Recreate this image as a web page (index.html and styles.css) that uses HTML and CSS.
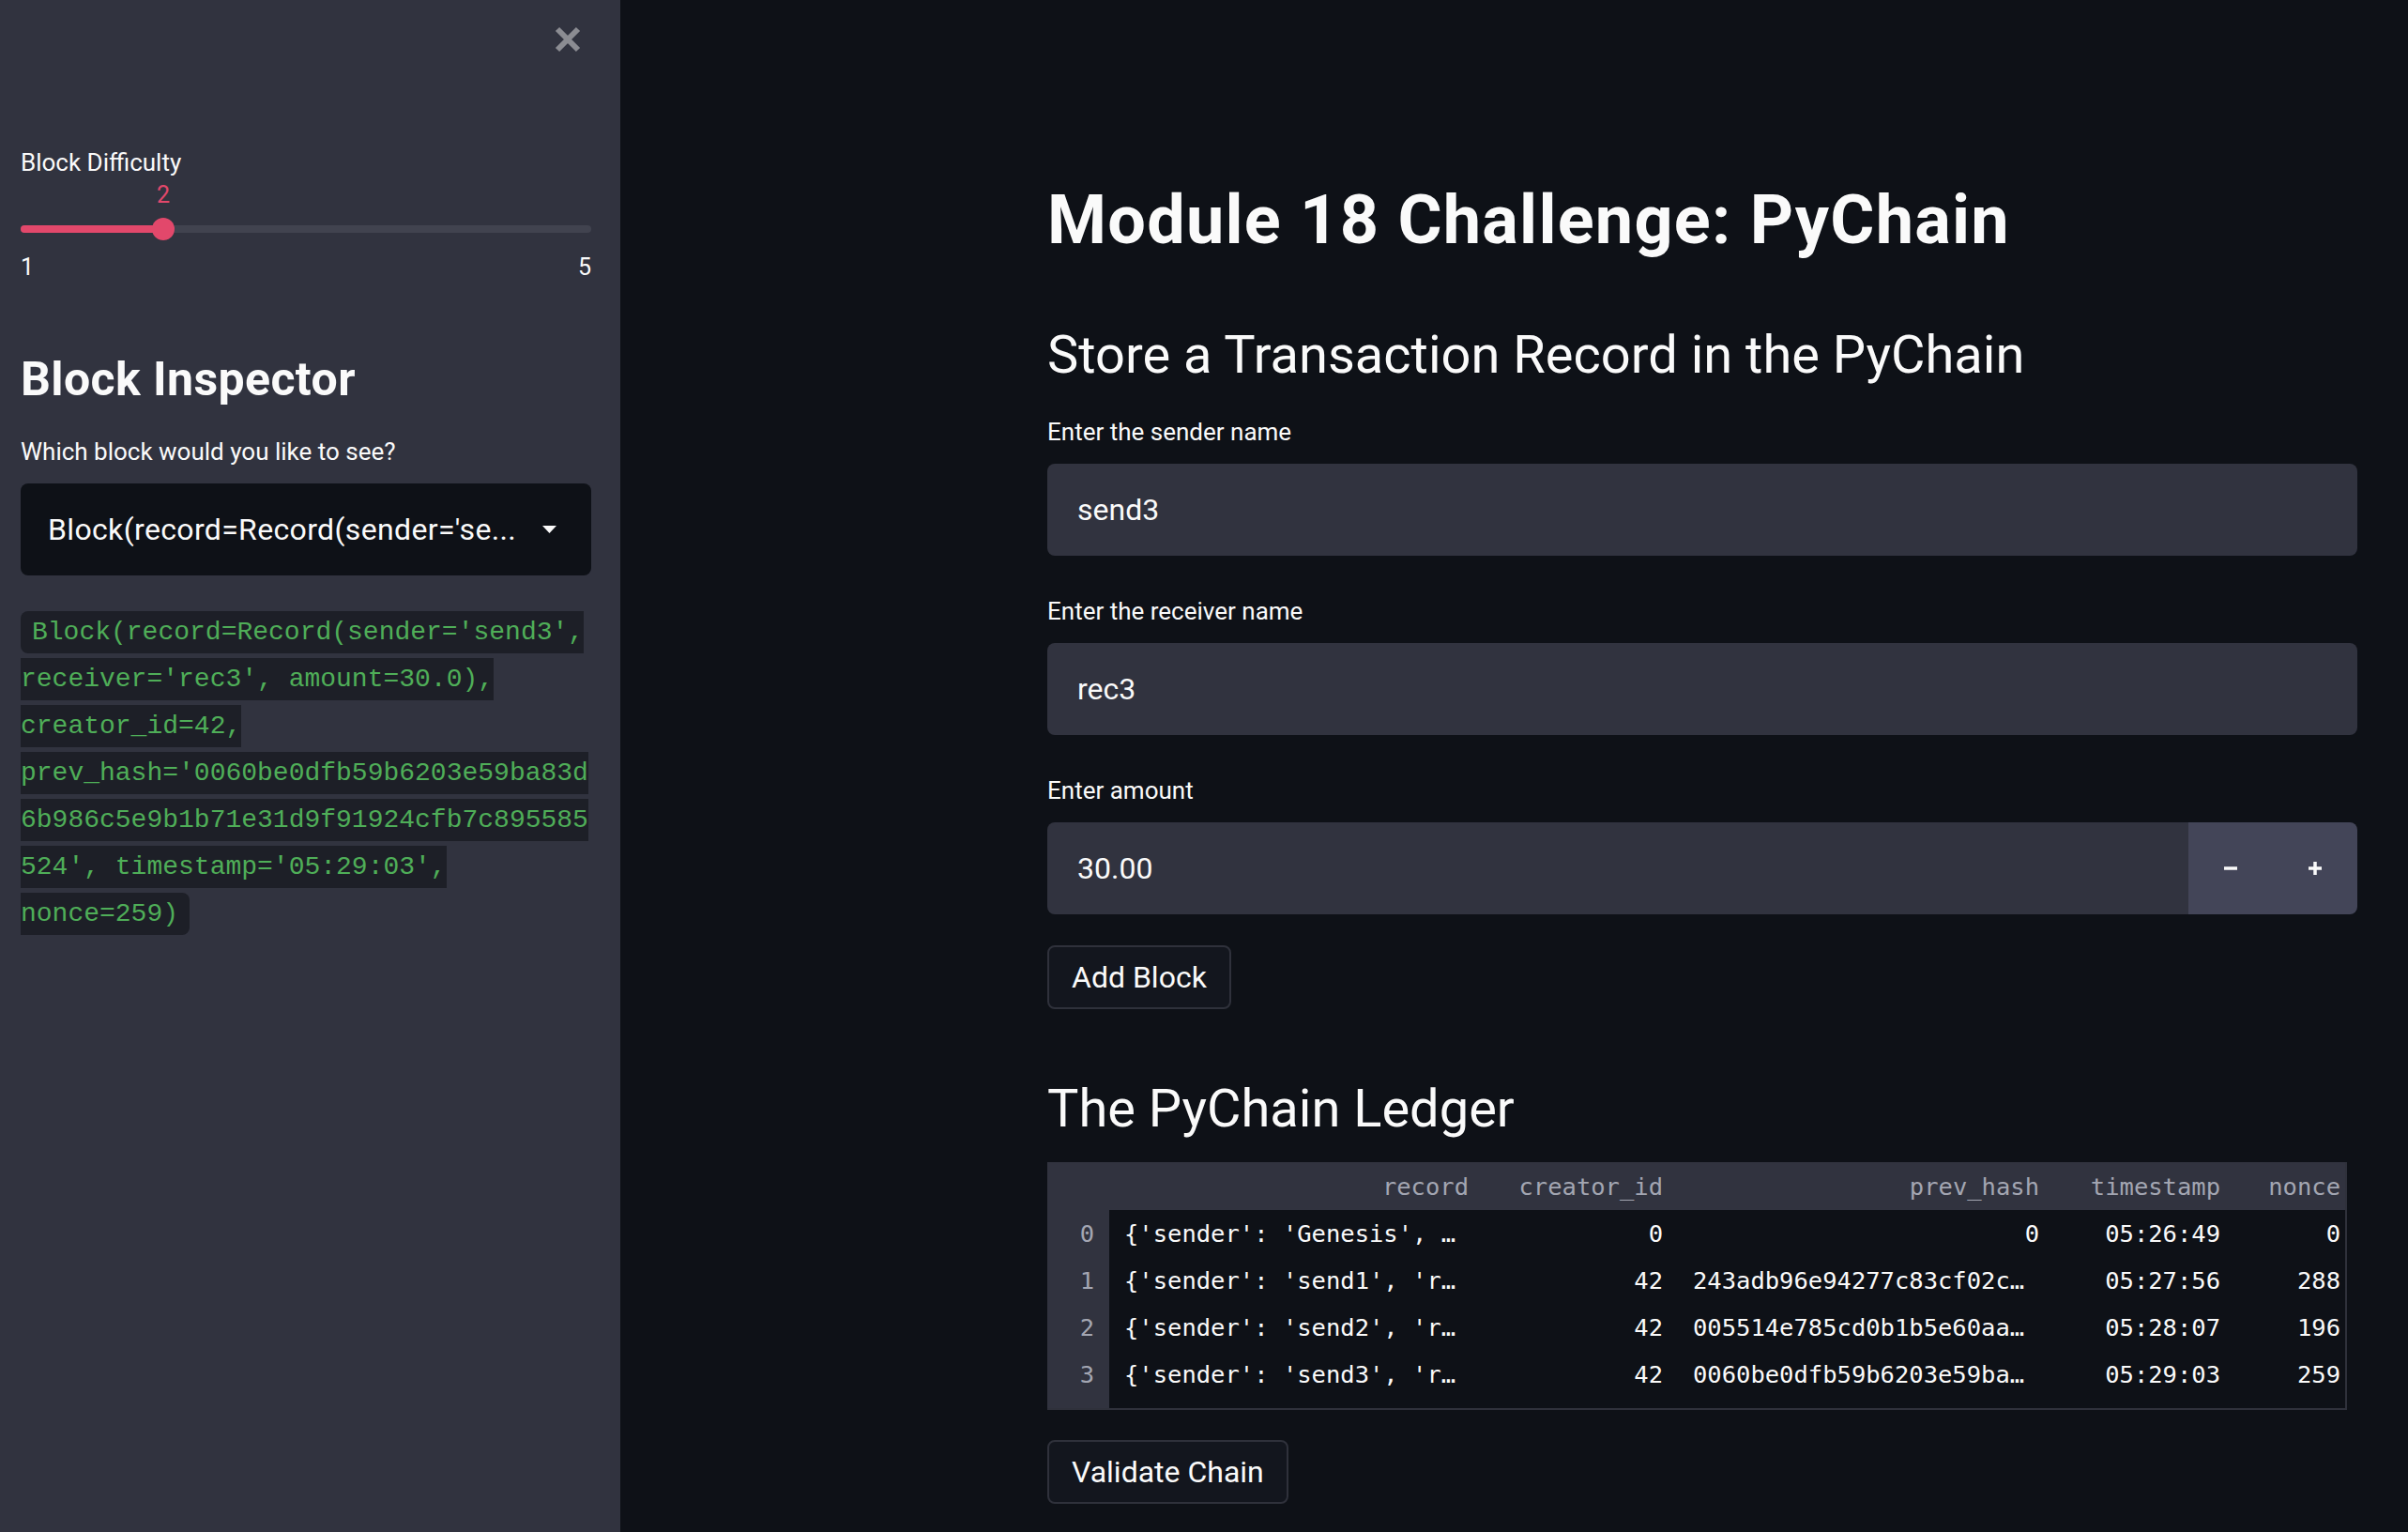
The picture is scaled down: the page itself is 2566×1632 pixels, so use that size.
FILE: index.html
```html
<!DOCTYPE html>
<html lang="en">
<head>
<meta charset="utf-8">
<title>PyChain</title>
<link rel="stylesheet" href="styles.css">
</head>
<body>
<div class="app">
  <aside class="sidebar">
    <div class="sb-top">
      <button class="close" aria-label="Close sidebar">
        <svg width="30" height="28" viewBox="0 0 30 28"><path d="M4 3 L26 25 M26 3 L4 25" stroke="#8b8c92" stroke-width="6" fill="none"/></svg>
      </button>
    </div>

    <div class="slider">
      <label class="wlabel slider-label">Block Difficulty</label>
      <div class="slider-value-row">
        <span class="slider-value" style="left:25%">2</span>
      </div>
      <div class="slider-track">
        <div class="rail"></div>
        <div class="fill" style="width:25%"></div>
        <div class="thumb" style="left:25%"></div>
      </div>
      <div class="ticks"><span>1</span><span>5</span></div>
    </div>

    <h2 class="sb-h">Block Inspector</h2>
    <label class="wlabel sb-label">Which block would you like to see?</label>
    <div class="select">
      <span class="select-text">Block(record=Record(sender='se...</span>
      <svg width="15" height="8" viewBox="0 0 15 8"><path d="M0 0 H15 L7.5 8 Z" fill="#fafafa"/></svg>
    </div>

    <p class="code-p"><code>Block(record=Record(sender='send3', receiver='rec3', amount=30.0), creator_id=42, prev_hash='0060be0dfb59b6203e59ba83d6b986c5e9b1b71e31d9f91924cfb7c895585524', timestamp='05:29:03', nonce=259)</code></p>
  </aside>

  <main class="main">
    <div class="block">
      <h1 class="title">Module 18 Challenge: PyChain</h1>
      <h2 class="sec sec-first">Store a Transaction Record in the PyChain</h2>

      <div class="field field-first">
        <label class="wlabel">Enter the sender name</label>
        <div class="input">send3</div>
      </div>
      <div class="field">
        <label class="wlabel">Enter the receiver name</label>
        <div class="input">rec3</div>
      </div>
      <div class="field">
        <label class="wlabel">Enter amount</label>
        <div class="number">
          <div class="input num-input">30.00</div>
          <div class="step">
            <svg width="16" height="16" viewBox="0 0 16 16"><path d="M1 8 H15" stroke="#fafafa" stroke-width="3.5"/></svg>
          </div>
          <div class="step step-last">
            <svg width="16" height="16" viewBox="0 0 16 16"><path d="M1 8 H15 M8 1 V15" stroke="#fafafa" stroke-width="3.5"/></svg>
          </div>
        </div>
      </div>

      <button class="btn btn-add">Add Block</button>

      <h2 class="sec sec-ledger">The PyChain Ledger</h2>

      <div class="table-wrap">
        <table class="df">
          <colgroup>
            <col class="c-idx"><col class="c-rec"><col class="c-cre"><col class="c-hash"><col class="c-ts"><col class="c-non">
          </colgroup>
          <thead>
            <tr><th class="idx"></th><th>record</th><th>creator_id</th><th>prev_hash</th><th>timestamp</th><th class="last">nonce</th></tr>
          </thead>
          <tbody>
            <tr><th class="idx">0</th><td class="l">{'sender': 'Genesis', …</td><td>0</td><td>0</td><td>05:26:49</td><td class="last">0</td></tr>
            <tr><th class="idx">1</th><td class="l">{'sender': 'send1', 'r…</td><td>42</td><td class="l">243adb96e94277c83cf02c…</td><td>05:27:56</td><td class="last">288</td></tr>
            <tr><th class="idx">2</th><td class="l">{'sender': 'send2', 'r…</td><td>42</td><td class="l">005514e785cd0b1b5e60aa…</td><td>05:28:07</td><td class="last">196</td></tr>
            <tr><th class="idx">3</th><td class="l">{'sender': 'send3', 'r…</td><td>42</td><td class="l">0060be0dfb59b6203e59ba…</td><td>05:29:03</td><td class="last">259</td></tr>
            <tr class="spacer"><th class="idx"></th><td colspan="5"></td></tr>
          </tbody>
        </table>
      </div>

      <button class="btn btn-validate">Validate Chain</button>
    </div>
  </main>
</div>
</body>
</html>
```

FILE: styles.css
```css
* { box-sizing: border-box; }
html, body { margin: 0; padding: 0; }
body {
  font-family: Roboto, "Liberation Sans", sans-serif;
  color: #fafafa;
  background: #0e1117;
  overflow: hidden;
}
.app { display: flex; height: 1632px; }

/* ---------- sidebar ---------- */
.sidebar {
  width: 661px;
  flex: none;
  background: #31333f;
  padding: 0 31px 0 22px;
}
.sb-top {
  display: flex;
  justify-content: flex-end;
  padding-top: 28px;
  padding-right: 10px;
}
.close {
  background: none;
  border: 0;
  padding: 0;
  margin: 0;
  width: 30px;
  height: 28px;
}
.close svg { display: block; }

.wlabel {
  display: block;
  font-size: 26px;
  line-height: 36px;
  color: #fafafa;
}
.slider-label { margin-top: 99px; }
.slider-value-row {
  position: relative;
  height: 30px;
  margin-top: 2px;
}
.slider-value {
  position: absolute;
  top: 0;
  transform: translateX(-50%);
  font-size: 25px;
  line-height: 30px;
  color: #e2486b;
}
.slider-track {
  position: relative;
  height: 24px;
  margin-top: 9px;
}
.rail {
  position: absolute;
  left: 0; right: 0; top: 8px;
  height: 8px;
  border-radius: 4px;
  background: #41434f;
}
.fill {
  position: absolute;
  left: 0; top: 8px;
  height: 8px;
  border-radius: 4px;
  background: #e2486b;
}
.thumb {
  position: absolute;
  top: 0;
  width: 24px;
  height: 24px;
  margin-left: -12px;
  border-radius: 50%;
  background: #e2486b;
}
.ticks {
  display: flex;
  justify-content: space-between;
  margin-top: 14px;
  font-size: 25px;
  line-height: 30px;
}

.sb-h {
  margin: 74px 0 0;
  font-size: 50px;
  line-height: 60px;
  font-weight: 700;
  letter-spacing: 0.4px;
}
.sb-label { margin-top: 29px; }
.select {
  margin-top: 16px;
  height: 98px;
  background: #0e1117;
  border-radius: 8px;
  display: flex;
  align-items: center;
  justify-content: space-between;
  padding: 0 37px 0 29px;
  font-size: 32px;
}
.select-text { letter-spacing: 0.35px; }
.select svg { display: block; }

.code-p {
  margin: 36px 0 0;
  font-family: "Liberation Mono", monospace;
  font-size: 28px;
  line-height: 50px;
  overflow-wrap: break-word;
}
.code-p code {
  font-family: "Liberation Mono", monospace;
  background: #1d1f27;
  color: #4fae58;
  padding: 6.6px 12px;
  border-radius: 8px;
}

/* ---------- main ---------- */
.main {
  flex: 1;
  padding: 192px 0 0 455px;
}
.block { width: 1396px; }
.title {
  margin: 0;
  font-size: 72px;
  line-height: 86px;
  font-weight: 700;
  letter-spacing: 1.25px;
}
.sec {
  margin: 0;
  font-size: 56px;
  line-height: 68px;
  font-weight: 400;
}
.sec-first { margin-top: 66px; }
.field { margin-top: 41px; }
.field-first { margin-top: 30px; }
.field .wlabel { margin-bottom: 16px; }
.input {
  height: 98px;
  background: #31333f;
  border-radius: 8px;
  display: flex;
  align-items: center;
  padding: 0 32px;
  font-size: 32px;
}
.number { display: flex; }
.num-input { flex: 1; border-radius: 8px 0 0 8px; }
.step {
  width: 90px;
  height: 98px;
  background: #434558;
  display: flex;
  align-items: center;
  justify-content: center;
}
.step-last { border-radius: 0 8px 8px 0; }

.btn {
  display: inline-flex;
  align-items: center;
  height: 68px;
  padding: 0 24px;
  background: #13161e;
  border: 2px solid #2f313b;
  border-radius: 8px;
  font-family: Roboto, "Liberation Sans", sans-serif;
  font-size: 32px;
  color: #fafafa;
}
.btn-add { margin-top: 33px; }
.sec-ledger { margin-top: 72px; }

.table-wrap {
  margin-top: 23px;
  width: 1385px;
  border-right: 2px solid #2f313b;
  border-bottom: 2px solid #2f313b;
}
.df {
  width: 1383px;
  table-layout: fixed;
  border-collapse: collapse;
  font-family: "DejaVu Sans Mono", monospace;
  font-size: 25.5px;
}
.c-idx { width: 66px; }
.c-rec { width: 399px; }
.c-cre { width: 207px; }
.c-hash { width: 401px; }
.c-ts { width: 193px; }
.c-non { width: 117px; }
.df thead th {
  height: 51px;
  background: #31333f;
  color: #a3a6b2;
  font-weight: 400;
  text-align: right;
  padding: 0 16px 0 0;
  white-space: nowrap;
}
.df td, .df tbody th {
  height: 50px;
  padding: 0 16px 0 0;
  text-align: right;
  white-space: nowrap;
  overflow: hidden;
  font-weight: 400;
}
.df td { color: #fafafa; }
.df td.l { text-align: left; padding: 0 0 0 16px; }
.df .idx {
  background: #31333f;
  color: #a3a6b2;
  padding-right: 16px;
}
.df .last { padding-right: 5px; }
.df .spacer td, .df .spacer th { height: 11px; }

.btn-validate { margin-top: 32px; }
```
